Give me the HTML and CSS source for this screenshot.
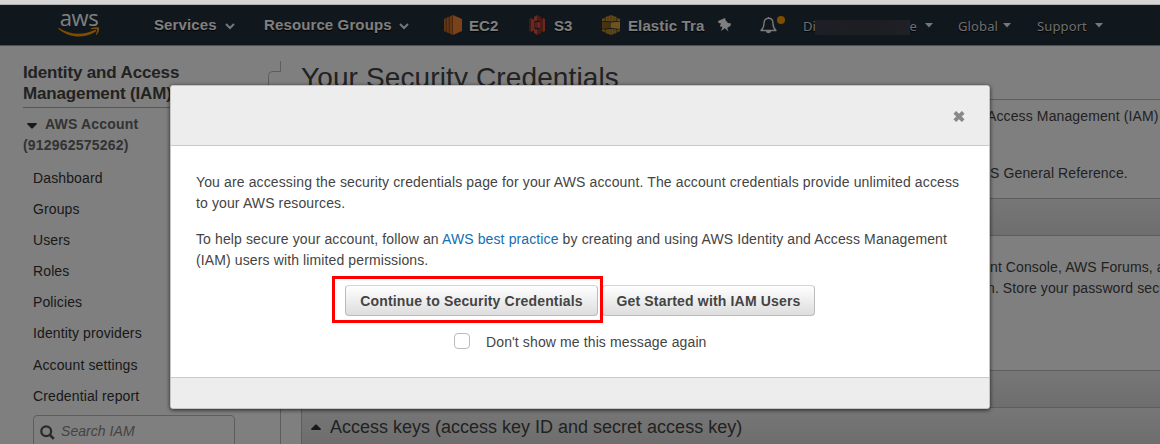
FILE: index.html
```html
<!DOCTYPE html>
<html lang="en">
<head>
<meta charset="utf-8">
<title>Your Security Credentials</title>
<link rel="stylesheet" href="styles.css">
</head>
<body>
<div class="page">
  <div class="browser-edge"></div>
  <nav class="topnav">
    <div class="logo">
      <span class="logo-word">aws</span>
      <svg class="smile" width="42" height="11" viewBox="0 0 42 11"><path d="M1 1C12 8.300 26 8.300 36.500 3C38 2.400 39 3.600 37.500 4.800C27 11.800 11 11.200 .5 2C0 1.200 .5.500 1 1z" fill="#ff9900"/><path d="M33 1.200C36 .2 40 0 41 .8C41.600 2.500 40.500 6 38.500 7.800C38 8.200 37.600 7.900 37.900 7.300C38.800 5 39.400 3 39 2.400C38.300 1.800 36 1.900 33.400 2.200C32.600 2.200 32.400 1.500 33 1.200z" fill="#ff9900"/></svg>
    </div>
    <span class="menu services">Services</span>
    <svg class="chev" width="10" height="7" viewBox="0 0 10 7"><path d="M1 1l4 4 4-4" fill="none" stroke="#eee" stroke-width="2"/></svg>
    <span class="menu groups">Resource Groups</span>
    <svg class="chev" width="10" height="7" viewBox="0 0 10 7"><path d="M1 1l4 4 4-4" fill="none" stroke="#eee" stroke-width="2"/></svg>
    <svg class="svc ec2" width="18" height="20" viewBox="0 0 18 20"><path d="M0 4l9-4v20l-9-4z" fill="#9d5320"/><path d="M0 4l1.500-.7v13.400L0 16zM3 2.700l1.500-.7v16l-1.500-.7zM6 1.300L8 .5v19l-2-.8z" fill="#c9702b"/><path d="M9 0l9 4v12l-9 4z" fill="#f58534"/></svg>
    <span class="menu short ec2-label">EC2</span>
    <svg class="svc s3" width="17" height="20" viewBox="0 0 17 20"><path d="M0 4l2-1v14l-2-1z" fill="#8c3123"/><path d="M2 3l3.500 2v10L2 17zM16 4l-2-1v14l2-1z" fill="#d84f40"/><path d="M14 3l-3.500 2v10l3.500 2z" fill="#9c3529"/><path d="M5 2l3.500-2v5.500L5 6zM5 14l3.500.5V20L5 18z" fill="#e25444"/><path d="M8.500 0L12 2v4l-3.500-.5zM8.500 14.500L12 14v4l-3.500 2z" fill="#9c3529"/><path d="M6 7.500l2.500-.5v6L6 12.500z" fill="#b73f32"/><path d="M8.500 7l2.500.5v5l-2.500.5z" fill="#e25444"/></svg>
    <span class="menu short s3-label">S3</span>
    <svg class="svc etc" width="19" height="20" viewBox="0 0 19 20"><path d="M0 6.500l9 1V13l-9 1z" fill="#8f6819"/><path d="M9 7.500l9-1V14l-9-1z" fill="#d9a741"/><path d="M3.500 2l5.500-2 5.500 2v4L9 6.500 3.500 6zM3.500 14.500L9 14l5.500.5V18L9 20l-5.500-2z" fill="#c9952f"/><path d="M0 4l2.800-1v3L0 6zM15.200 3l2.800 1v2h-2.800zM0 14.500h2.800v2.800L0 16zM15.200 14.500H18V16l-2.800 1.300z" fill="#c9952f"/><path d="M6 1v5M9 0v6M12 1v5M6 14.500V19M9 14.500V20M12 14.500V19" stroke="#775718" stroke-width=".7"/></svg>
    <span class="menu short etc-label">Elastic Tra</span>
    <svg class="pin" width="13" height="14" viewBox="0 0 13 14"><path d="M0 3L7 0l.7 2.500L10 5l3 .5-.5 2.300L9.200 10l1.300 3.500-3.700-3.200-3.800 2.700 1.500-4.300-2.800-.2 1.300-3L.5 5z" fill="#fff"/></svg>
    <div class="bell">
      <svg width="17" height="18" viewBox="0 0 17 18"><path d="M8.500 1v1M8.500 2.300C5 2.300 4 5 4 7.500c0 3.500-.8 5.200-3 7h15c-2.200-1.800-3-3.500-3-7 0-2.500-1-5.200-4.500-5.200z" fill="none" stroke="#f4f4f4" stroke-width="1.400" stroke-linejoin="round"/><path d="M6 15h5c0 3-5 3-5 0z" fill="#eee"/></svg>
      <i class="dot"></i>
    </div>
    <div class="account">Di<span class="mask"></span>e</div>
    <svg class="tri" width="8" height="5" viewBox="0 0 8 5"><path d="M0 0h8L4 4.500z" fill="#eee"/></svg>
    <span class="util global">Global</span>
    <svg class="tri" width="8" height="5" viewBox="0 0 8 5"><path d="M0 0h8L4 4.500z" fill="#eee"/></svg>
    <span class="util support">Support</span>
    <svg class="tri" width="8" height="5" viewBox="0 0 8 5"><path d="M0 0h8L4 4.500z" fill="#eee"/></svg>
  </nav>
  <div class="columns">
    <aside class="sidebar">
      <h2>Identity and Access<br>Management (IAM)</h2>
      <div class="acct"><svg width="10" height="6" viewBox="0 0 10 6"><path d="M0 1Q0 0 1 0h8q1 0 1 1L5.500 5.500h-1z" fill="#333"/></svg>AWS Account<br>(912962575262)</div>
      <ul>
        <li>Dashboard</li><li>Groups</li><li>Users</li><li>Roles</li><li>Policies</li><li>Identity providers</li><li>Account settings</li><li>Credential report</li>
      </ul>
      <div class="search"><svg width="15" height="15" viewBox="0 0 15 15"><circle cx="6.200" cy="6.200" r="4.900" fill="none" stroke="#555" stroke-width="2.300"/><path d="M9.800 9.800l4 4" stroke="#555" stroke-width="2.600"/></svg>Search IAM</div>
    </aside>
    <svg class="handle" width="14" height="383" viewBox="0 0 14 383"><path d="M12.500 0v10.500H4.500q-4 0-4 4V60q0 4 4 4h8V383" fill="none" stroke="#bbb"/></svg>
    <main>
      <h1>Your Security Credentials</h1>
      <div class="intro">
        <p class="iam">Access Management (IAM)</p>
        <p class="ref">S General Reference.</p>
      </div>
      <section class="bar"></section>
      <div class="details"><p>nt Console, AWS Forums, a</p><p class="store">n. Store your password secu</p></div>
      <section class="bar"></section>
      <section class="bar keys"><svg width="10" height="6" viewBox="0 0 10 6"><path d="M0 5Q0 6 1 6h8q1 0 1-1L5.500.5h-1z" fill="#333"/></svg>Access keys (access key ID and secret access key)</section>
    </main>
  </div>
</div>
<div class="shade"></div>
<div class="dialog">
  <header><svg width="12" height="11" viewBox="0 0 12 11"><path d="M1.800 1.300l8.400 8.400M10.200 1.300L1.800 9.700" stroke="#888" stroke-width="3.800"/></svg></header>
  <div class="content">
    <p><span class="l1">You are accessing the security credentials page for your AWS account. The account credentials provide unlimited access</span><br>to your AWS resources.</p>
    <p><span class="l2">To help secure your account, follow an <a>AWS best practice</a> by creating and using AWS Identity and Access Management</span><br>(IAM) users with limited permissions.</p>
    <div class="buttons">
      <button class="continue">Continue to Security Credentials</button>
      <button class="start">Get Started with IAM Users</button>
      <i class="highlight"></i>
    </div>
    <label class="again"><i class="box"></i><span>Don't show me this message again</span></label>
  </div>
  <footer></footer>
</div>
</body>
</html>
```
FILE: styles.css
```css
* { box-sizing: border-box; }
body { margin: 0; width: 1160px; height: 444px; overflow: hidden; font: 14px/21px "Liberation Sans", Arial, sans-serif; color: #444; letter-spacing: .12px; }
h1, h2, p, ul { margin: 0; padding: 0; }
svg { display: block; flex: none; }
.page { height: 444px; overflow: hidden; background: #fff; }
.browser-edge { height: 5px; background: #d5d5d5; border-bottom: 1px solid #b0b0b0; }
.topnav { height: 41px; background: #202e3b; border-bottom: 1px solid #a0a0a0; display: flex; align-items: center; color: #fff; white-space: nowrap; }
.logo { width: 42px; margin-left: 58px; height: 28px; flex: none; margin-top: -4px; }
.logo-word { display: block; font: 500 22px/16px "Open Sans", sans-serif; letter-spacing: -.4px; text-align: center; height: 18px; }
.smile { margin-top: 0; }
.menu { font-size: 15px; font-weight: bold; text-shadow: 0 1px 1px #000; flex: none; padding-bottom: 2px; }
.services { margin-left: 54px; width: 61px; }
.chev { margin: 2px 0 0 10px; }
.groups { margin-left: 29px; width: 125px; }
.ec2 { margin-left: 35px; }
.menu.short { padding: 1px 0 0; }
.ec2-label { margin-left: 7px; width: 30px; }
.s3 { margin-left: 30px; }
.s3-label { margin-left: 8px; width: 19px; }
.etc { margin-left: 29px; }
.etc-label { margin-left: 7px; width: 74px; }
.pin { margin-left: 16px; margin-top: -1px; }
.bell { position: relative; margin-left: 29px; width: 17px; }
.dot { position: absolute; left: 17px; top: 0; width: 8px; height: 8px; border-radius: 50%; background: #ff9900; }
.account, .util { font: 13px/21px "Noto Sans", sans-serif; color: #ddd; flex: none; text-shadow: 0 1px 1px #000; padding-top: 2px; }
.account { margin-left: 26px; width: 114px; display: flex; }
.mask { width: 98px; height: 15px; margin: 4px 0 0 -1px; background: linear-gradient(90deg, #3e404e, #383c45 50%, #40404b); }
.tri { margin-left: 8px; }
.global { margin-left: 25px; width: 37px; }
.support { margin-left: 26px; width: 49px; }
.support + .tri { margin-left: 9px; }
.columns { display: flex; height: 398px; }
.sidebar { width: 268px; flex: none; padding: 16px 0 0 23px; }
h2 { font-size: 17px; line-height: 21px; color: #444; width: 230px; height: 46px; border-bottom: 1px solid #aaa; letter-spacing: -.15px; }
.acct { font-weight: bold; color: #666; padding-top: 6px; height: 55px; letter-spacing: .2px; }
.acct svg { display: inline-block; margin: 0 8px 0 4px; vertical-align: 0; }
.sidebar ul { list-style: none; padding-left: 10px; }
.sidebar li { height: 31.1px; line-height: 31px; color: #333; }
.search { margin: 3px 0 0 10px; width: 202px; height: 33px; border: 1px solid #bbb; border-radius: 4px; display: flex; align-items: center; padding-left: 6px; gap: 6px; font-style: italic; color: #888; letter-spacing: .05px; }
.search svg { margin-top: 2px; }
.handle { margin-top: 15px; }
main { flex: 1; min-width: 0; padding-left: 19px; overflow: hidden; white-space: nowrap; color: #444; }
h1 { font-size: 28px; font-weight: normal; line-height: 34px; height: 54px; padding-top: 15px; letter-spacing: .12px; border-bottom: 1px solid #bbb; color: #444; }
.intro { height: 98px; padding: 6px 0 0 686px; }
.ref { margin: 36px 0 0 3px; }
.bar { height: 37px; border: solid #bbb; border-width: 1px 0 0 1px; background: linear-gradient(#eee, #dcdcdc); }
.details { height: 135px; border: solid #bbb; border-width: 1px 0 0 1px; padding: 21px 0 0 688px; }
.details p { letter-spacing: .1px; }
.store { margin-left: -3px; }
.keys { display: flex; align-items: center; font-size: 18px; padding: 2px 0 0 9px; gap: 9px; letter-spacing: 0; }
.shade { position: absolute; left: 0; top: 5px; width: 1160px; height: 439px; background: rgba(0,0,0,.5); }
.dialog { position: absolute; left: 170px; top: 85px; width: 820px; height: 324px; border: 1px solid #c4c4c4; border-radius: 3px; background: #fff; box-shadow: 0 1px 4px rgba(0,0,0,.7); display: flex; flex-direction: column; overflow: hidden; white-space: nowrap; }
.dialog header { height: 60px; flex: none; background: #ededed; border-bottom: 1px solid #c9c9c9; display: flex; justify-content: flex-end; align-items: center; padding: 2px 24px 0 0; }
.content { flex: 1; padding: 26px 25px 0; }
.content p { margin-bottom: 15px; }
.l1 { letter-spacing: .128px; }
a { color: #146eb4; }
.buttons { position: relative; display: flex; gap: 4px; width: 470px; margin: -1px 0 0 149px; }
button { height: 31px; padding: 2px 0 0; border: 1px solid #bbb; border-top-color: #d4d4d4; border-radius: 4px; background: linear-gradient(#fff, #ddd); font: bold 14px/21px "Liberation Sans", Arial, sans-serif; color: #444; letter-spacing: .17px; }
.continue { width: 253px; }
.start { flex: 1; }
.highlight { position: absolute; left: -13px; top: -9px; width: 271px; height: 47px; border: 3px solid #f00; }
.again { display: flex; align-items: center; gap: 16px; margin: 15px 0 0 258px; }
.again span { padding-top: 1px; }
.box { width: 16px; height: 16px; border: 1px solid #bbb; border-radius: 4px; margin-top: -3px; }
.dialog footer { height: 31px; flex: none; background: #ededed; border-top: 1px solid #c9c9c9; }
```
